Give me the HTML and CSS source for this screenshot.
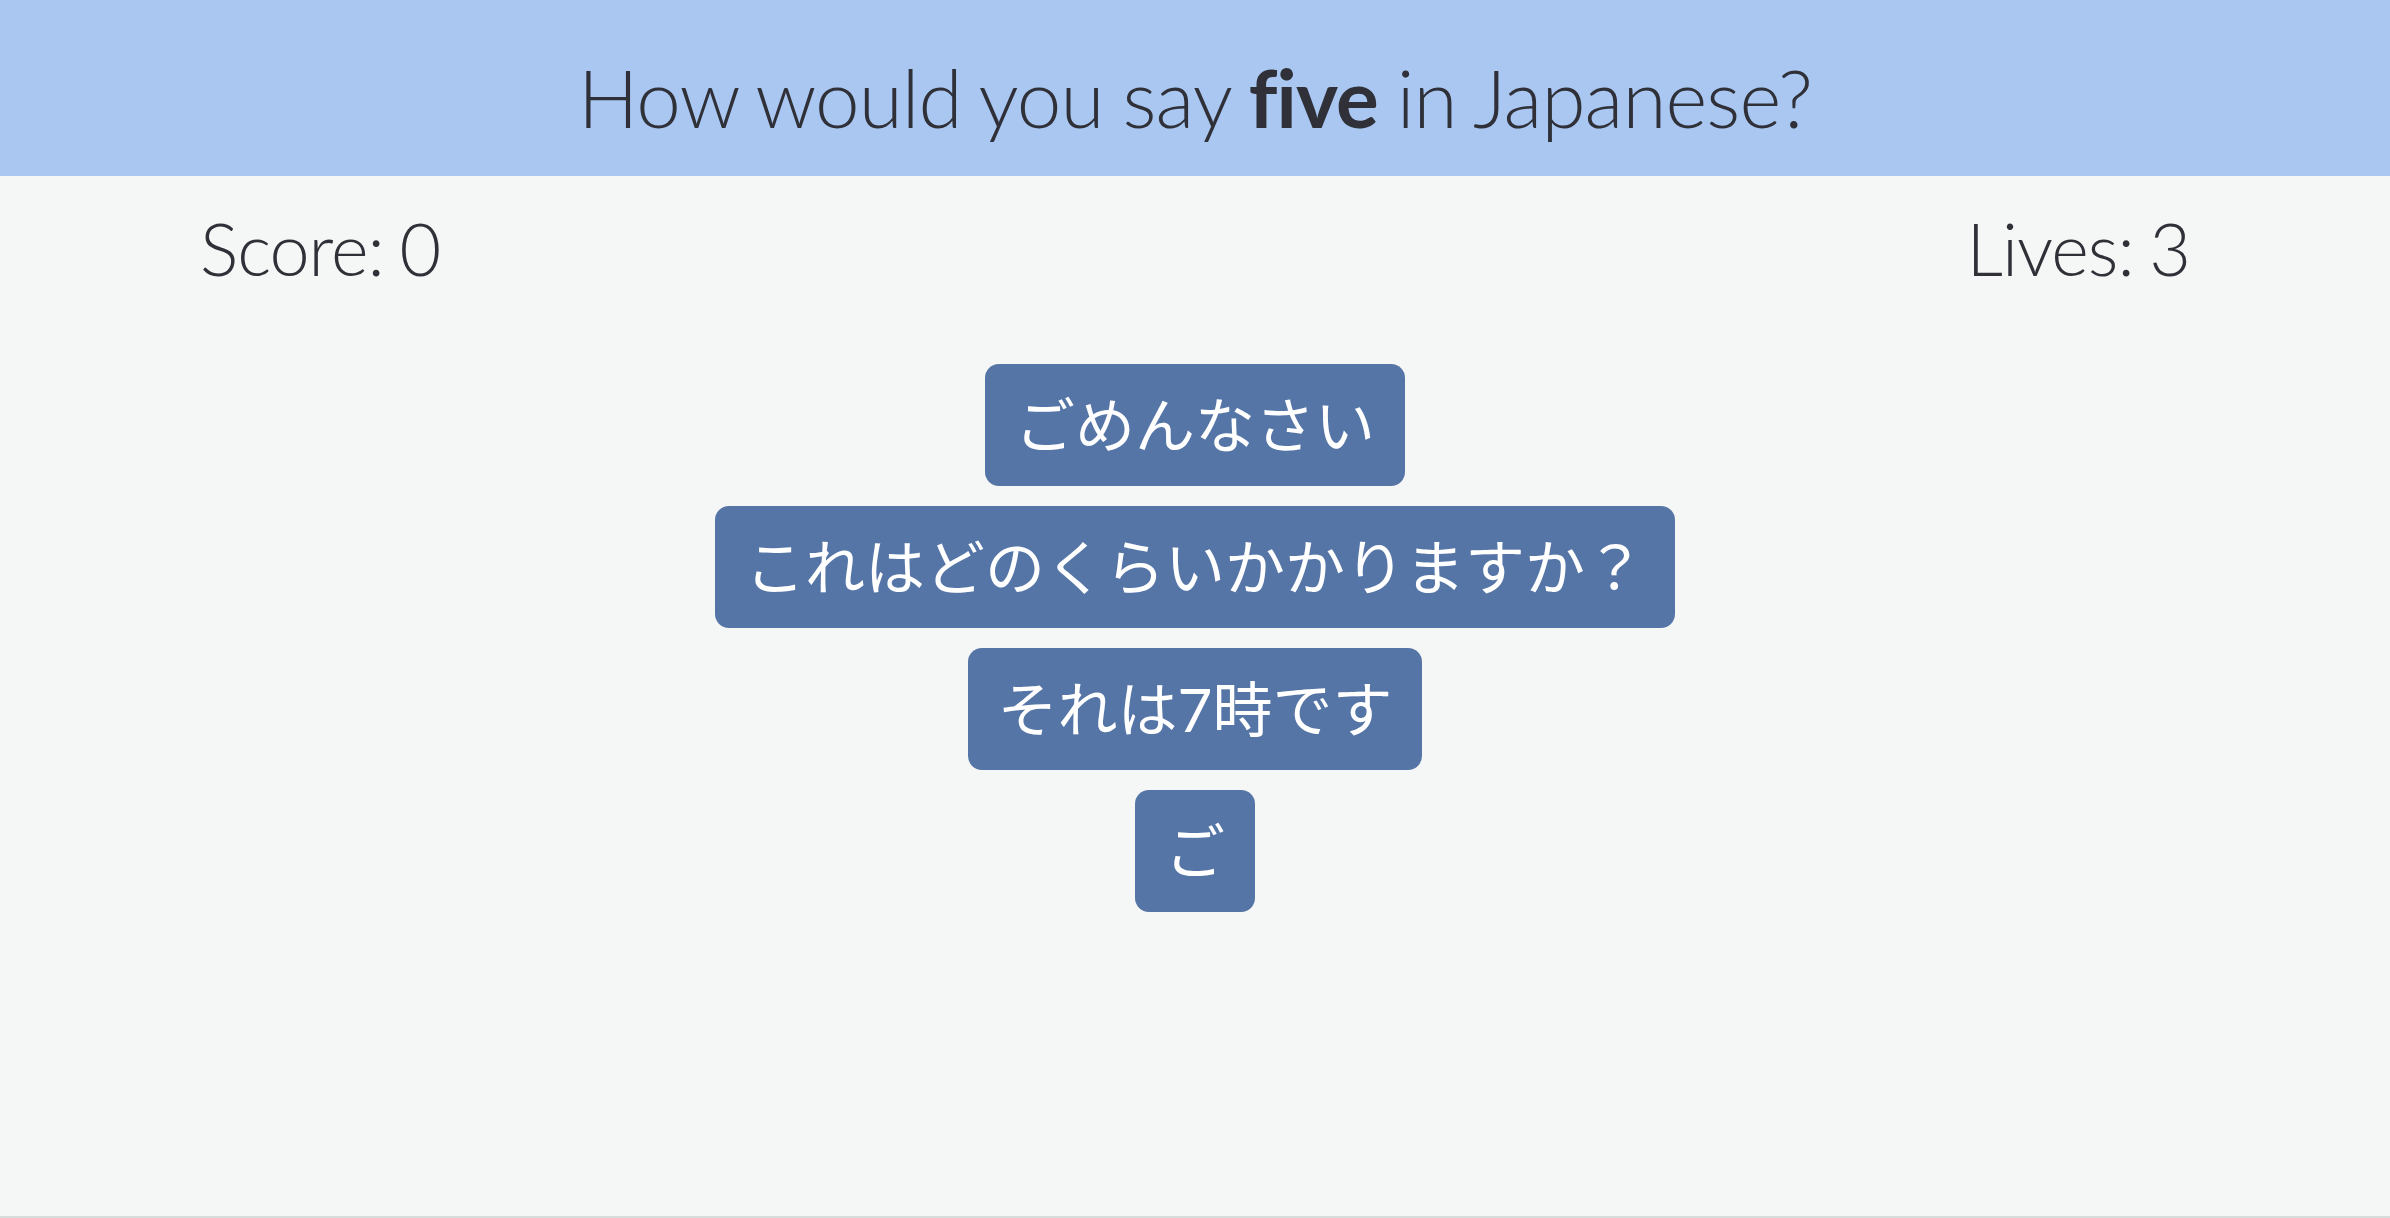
FILE: index.html
```html
<!DOCTYPE html>
<html lang="en">
<head>
<meta charset="utf-8">
<title>Japanese Quiz</title>
<link rel="stylesheet" href="styles.css">
</head>
<body>
<div class="app">
  <header class="question-bar">
    <h1 class="question">How would you say <strong>five</strong> in Japanese?</h1>
  </header>
  <div class="stats">
    <div class="stat">Score: 0</div>
    <div class="stat">Lives: 3</div>
  </div>
  <div class="answers">
    <button class="answer">ごめんなさい</button>
    <button class="answer">これはどのくらいかかりますか？</button>
    <button class="answer">それは7時です</button>
    <button class="answer">ご</button>
  </div>
</div>
</body>
</html>
```
FILE: styles.css
```css
html, body {
  margin: 0;
  padding: 0;
}
body {
  background: #f5f7f6;
  font-family: Lato, "Noto Sans CJK JP", sans-serif;
  color: #2f3038;
  font-variant-ligatures: none;
}
.app {
  box-sizing: border-box;
  height: 1218px;
  border-bottom: 2px solid #d6dddb;
  background: #f5f7f6;
}
.question-bar {
  height: 176px;
  background: #a9c7f1;
  display: flex;
  justify-content: center;
  box-sizing: border-box;
  padding-top: 49px;
}
.question {
  margin: 0;
  font-size: 80px;
  font-weight: 300;
  line-height: 96px;
  letter-spacing: -0.9px;
  word-spacing: -2px;
  color: #2f3038;
}
.question strong {
  font-weight: 700;
}
.stats {
  display: flex;
  justify-content: space-between;
  padding: 29px 200px 0 200px;
}
.stat {
  font-size: 72px;
  font-weight: 300;
  line-height: 86px;
  letter-spacing: -1px;
  word-spacing: -3px;
}
.answers {
  display: flex;
  flex-direction: column;
  align-items: center;
  gap: 20px;
  margin-top: 73px;
}
.answer {
  font-family: Lato, "Noto Sans CJK JP", sans-serif;
  font-size: 60px;
  font-weight: 400;
  line-height: 72px;
  padding: 25px 30px;
  color: #ffffff;
  background: #5675a7;
  border: none;
  border-radius: 14px;
  cursor: pointer;
}
```
